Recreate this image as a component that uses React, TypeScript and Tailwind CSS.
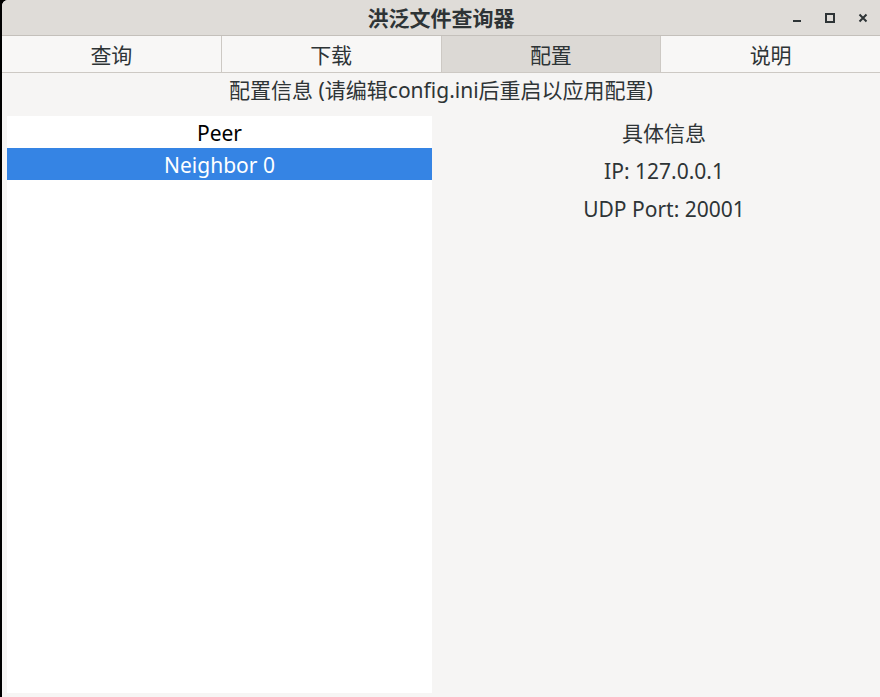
const tabs = ['查询', '下载', '配置', '说明']

const font = { fontFamily: '"Noto Sans", "Noto Sans CJK SC", sans-serif' }

export default function App() {
  return (
    <div className="flex h-[697px] w-[880px] bg-black" style={font}>
      <div className="ml-[2px] flex flex-1 flex-col overflow-hidden rounded-tl-[6px] bg-[#f6f5f4]">
        {/* title bar */}
        <div className="relative flex h-[36px] items-center justify-center border-b border-[#c4c0bb] bg-[#dfdcd8]">
          <span className="pt-[1px] text-[21px] font-bold leading-none text-[#2e3436]">洪泛文件查询器</span>
          <div className="absolute right-[11px] top-0 flex h-full items-center gap-[21px] text-[#2e3436]">
            <svg width="12" height="12" viewBox="0 0 12 12">
              <rect x="2" y="8" width="8" height="2" fill="currentColor" />
            </svg>
            <svg width="12" height="12" viewBox="0 0 12 12">
              <rect x="2" y="2" width="8" height="8" fill="none" stroke="currentColor" strokeWidth="2" />
            </svg>
            <svg width="12" height="12" viewBox="0 0 12 12">
              <path d="M2.5 2.5 L9.5 9.5 M9.5 2.5 L2.5 9.5" stroke="currentColor" strokeWidth="2" />
            </svg>
          </div>
        </div>

        {/* tabs */}
        <div className="flex h-[37px] border-b border-[#cdc9c4]">
          {tabs.map((t, i) => (
            <div
              key={t}
              className={
                'flex flex-1 items-center justify-center pt-[3px] text-[21px] leading-none text-[#2e3436] ' +
                (i > 0 ? 'border-l border-[#cdc9c4] ' : '') +
                (i === 2 ? 'bg-[#dcd9d5]' : 'bg-[#f8f7f6]')
              }
            >
              {t}
            </div>
          ))}
        </div>

        <div className="flex h-[32px] items-center justify-center pt-[2px] text-[21px] leading-none text-[#2e3436]">
          配置信息 (请编辑config.ini后重启以应用配置)
        </div>

        {/* content */}
        <div className="mt-[11px] flex flex-1 pl-[5px] pb-[4px]">
          <div className="w-[425px] bg-white">
            <div className="flex h-[32px] items-center justify-center pt-[2px] text-[21px] leading-none text-black">Peer</div>
            <div className="flex h-[32px] items-center justify-center bg-[#3584e4] pt-[2px] text-[21px] leading-none text-white">
              Neighbor 0
            </div>
          </div>
          <div className="flex flex-1 flex-col items-center pl-[16px] pt-[2px] text-[21px] leading-none text-[#2e3436]">
            <div className="flex h-[30px] items-center">具体信息</div>
            <div className="mt-[8px] flex h-[30px] items-center">IP: 127.0.0.1</div>
            <div className="mt-[8px] flex h-[30px] items-center">UDP Port: 20001</div>
          </div>
        </div>
      </div>
    </div>
  )
}
